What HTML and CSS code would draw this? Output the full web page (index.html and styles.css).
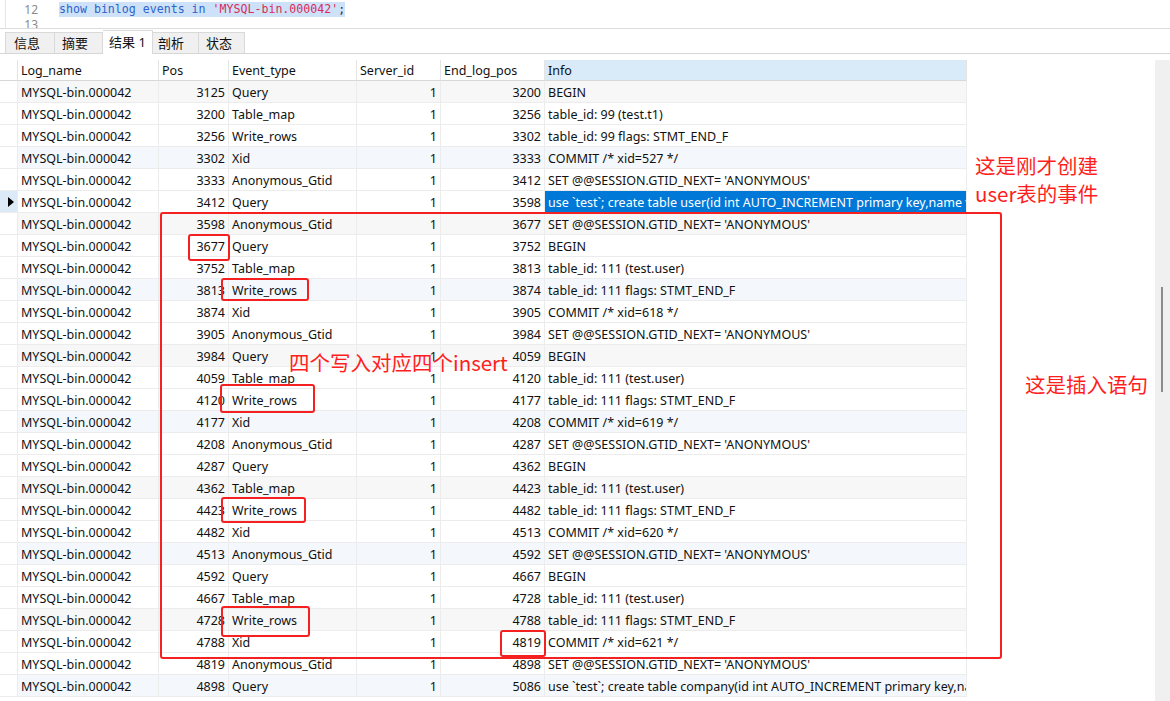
FILE: index.html
```html
<!DOCTYPE html>
<html lang="zh-CN">
<head>
<meta charset="utf-8">
<title>binlog events</title>
<link rel="stylesheet" href="styles.css">
</head>
<body>
<div class="editor">
  <div class="line"><span class="ln">12</span><span class="code"><span class="hl"><span class="kw">show binlog events in </span><span class="str">'MYSQL-bin.000042'</span><span class="pn">;</span></span></span></div>
  <div class="line"><span class="ln">13</span><span class="code"></span></div>
</div>
<div class="tabs">
  <div class="tab t1">信息</div>
  <div class="tab t2">摘要</div>
  <div class="tab t3 active">结果 1</div>
  <div class="tab t4">剖析</div>
  <div class="tab t5">状态</div>
</div>
<div class="result">
  <div class="grid">
    <div class="row head"><div class="c gut"></div><div class="c">Log_name</div><div class="c">Pos</div><div class="c">Event_type</div><div class="c">Server_id</div><div class="c">End_log_pos</div><div class="c info-h">Info</div></div>
    <div class="row g"><div class="c gut"></div><div class="c">MYSQL-bin.000042</div><div class="c r">3125</div><div class="c">Query</div><div class="c r">1</div><div class="c r">3200</div><div class="c">BEGIN</div></div>
    <div class="row"><div class="c gut"></div><div class="c">MYSQL-bin.000042</div><div class="c r">3200</div><div class="c">Table_map</div><div class="c r">1</div><div class="c r">3256</div><div class="c">table_id: 99 (test.t1)</div></div>
    <div class="row"><div class="c gut"></div><div class="c">MYSQL-bin.000042</div><div class="c r">3256</div><div class="c">Write_rows</div><div class="c r">1</div><div class="c r">3302</div><div class="c">table_id: 99 flags: STMT_END_F</div></div>
    <div class="row b"><div class="c gut"></div><div class="c">MYSQL-bin.000042</div><div class="c r">3302</div><div class="c">Xid</div><div class="c r">1</div><div class="c r">3333</div><div class="c">COMMIT /* xid=527 */</div></div>
    <div class="row"><div class="c gut"></div><div class="c">MYSQL-bin.000042</div><div class="c r">3333</div><div class="c">Anonymous_Gtid</div><div class="c r">1</div><div class="c r">3412</div><div class="c">SET @@SESSION.GTID_NEXT= 'ANONYMOUS'</div></div>
    <div class="row"><div class="c gut cur"><span class="tri"></span></div><div class="c">MYSQL-bin.000042</div><div class="c r">3412</div><div class="c">Query</div><div class="c r">1</div><div class="c r">3598</div><div class="c sel">use `test`; create table user(id int AUTO_INCREMENT primary key,name varchar(20))</div></div>
    <div class="row g"><div class="c gut"></div><div class="c">MYSQL-bin.000042</div><div class="c r">3598</div><div class="c">Anonymous_Gtid</div><div class="c r">1</div><div class="c r">3677</div><div class="c">SET @@SESSION.GTID_NEXT= 'ANONYMOUS'</div></div>
    <div class="row"><div class="c gut"></div><div class="c">MYSQL-bin.000042</div><div class="c r">3677</div><div class="c">Query</div><div class="c r">1</div><div class="c r">3752</div><div class="c">BEGIN</div></div>
    <div class="row"><div class="c gut"></div><div class="c">MYSQL-bin.000042</div><div class="c r">3752</div><div class="c">Table_map</div><div class="c r">1</div><div class="c r">3813</div><div class="c">table_id: 111 (test.user)</div></div>
    <div class="row b"><div class="c gut"></div><div class="c">MYSQL-bin.000042</div><div class="c r">3813</div><div class="c">Write_rows</div><div class="c r">1</div><div class="c r">3874</div><div class="c">table_id: 111 flags: STMT_END_F</div></div>
    <div class="row"><div class="c gut"></div><div class="c">MYSQL-bin.000042</div><div class="c r">3874</div><div class="c">Xid</div><div class="c r">1</div><div class="c r">3905</div><div class="c">COMMIT /* xid=618 */</div></div>
    <div class="row"><div class="c gut"></div><div class="c">MYSQL-bin.000042</div><div class="c r">3905</div><div class="c">Anonymous_Gtid</div><div class="c r">1</div><div class="c r">3984</div><div class="c">SET @@SESSION.GTID_NEXT= 'ANONYMOUS'</div></div>
    <div class="row g"><div class="c gut"></div><div class="c">MYSQL-bin.000042</div><div class="c r">3984</div><div class="c">Query</div><div class="c r">1</div><div class="c r">4059</div><div class="c">BEGIN</div></div>
    <div class="row"><div class="c gut"></div><div class="c">MYSQL-bin.000042</div><div class="c r">4059</div><div class="c">Table_map</div><div class="c r">1</div><div class="c r">4120</div><div class="c">table_id: 111 (test.user)</div></div>
    <div class="row"><div class="c gut"></div><div class="c">MYSQL-bin.000042</div><div class="c r">4120</div><div class="c">Write_rows</div><div class="c r">1</div><div class="c r">4177</div><div class="c">table_id: 111 flags: STMT_END_F</div></div>
    <div class="row b"><div class="c gut"></div><div class="c">MYSQL-bin.000042</div><div class="c r">4177</div><div class="c">Xid</div><div class="c r">1</div><div class="c r">4208</div><div class="c">COMMIT /* xid=619 */</div></div>
    <div class="row"><div class="c gut"></div><div class="c">MYSQL-bin.000042</div><div class="c r">4208</div><div class="c">Anonymous_Gtid</div><div class="c r">1</div><div class="c r">4287</div><div class="c">SET @@SESSION.GTID_NEXT= 'ANONYMOUS'</div></div>
    <div class="row"><div class="c gut"></div><div class="c">MYSQL-bin.000042</div><div class="c r">4287</div><div class="c">Query</div><div class="c r">1</div><div class="c r">4362</div><div class="c">BEGIN</div></div>
    <div class="row g"><div class="c gut"></div><div class="c">MYSQL-bin.000042</div><div class="c r">4362</div><div class="c">Table_map</div><div class="c r">1</div><div class="c r">4423</div><div class="c">table_id: 111 (test.user)</div></div>
    <div class="row"><div class="c gut"></div><div class="c">MYSQL-bin.000042</div><div class="c r">4423</div><div class="c">Write_rows</div><div class="c r">1</div><div class="c r">4482</div><div class="c">table_id: 111 flags: STMT_END_F</div></div>
    <div class="row"><div class="c gut"></div><div class="c">MYSQL-bin.000042</div><div class="c r">4482</div><div class="c">Xid</div><div class="c r">1</div><div class="c r">4513</div><div class="c">COMMIT /* xid=620 */</div></div>
    <div class="row b"><div class="c gut"></div><div class="c">MYSQL-bin.000042</div><div class="c r">4513</div><div class="c">Anonymous_Gtid</div><div class="c r">1</div><div class="c r">4592</div><div class="c">SET @@SESSION.GTID_NEXT= 'ANONYMOUS'</div></div>
    <div class="row"><div class="c gut"></div><div class="c">MYSQL-bin.000042</div><div class="c r">4592</div><div class="c">Query</div><div class="c r">1</div><div class="c r">4667</div><div class="c">BEGIN</div></div>
    <div class="row"><div class="c gut"></div><div class="c">MYSQL-bin.000042</div><div class="c r">4667</div><div class="c">Table_map</div><div class="c r">1</div><div class="c r">4728</div><div class="c">table_id: 111 (test.user)</div></div>
    <div class="row g"><div class="c gut"></div><div class="c">MYSQL-bin.000042</div><div class="c r">4728</div><div class="c">Write_rows</div><div class="c r">1</div><div class="c r">4788</div><div class="c">table_id: 111 flags: STMT_END_F</div></div>
    <div class="row"><div class="c gut"></div><div class="c">MYSQL-bin.000042</div><div class="c r">4788</div><div class="c">Xid</div><div class="c r">1</div><div class="c r">4819</div><div class="c">COMMIT /* xid=621 */</div></div>
    <div class="row"><div class="c gut"></div><div class="c">MYSQL-bin.000042</div><div class="c r">4819</div><div class="c">Anonymous_Gtid</div><div class="c r">1</div><div class="c r">4898</div><div class="c">SET @@SESSION.GTID_NEXT= 'ANONYMOUS'</div></div>
    <div class="row b"><div class="c gut"></div><div class="c">MYSQL-bin.000042</div><div class="c r">4898</div><div class="c">Query</div><div class="c r">1</div><div class="c r">5086</div><div class="c">use `test`; create table company(id int AUTO_INCREMENT primary key,name varchar(20))</div></div>
  </div>
  <div class="vscroll"><div class="thumb"></div></div>
</div>

<div class="mark big"></div>
<div class="mark m1"></div>
<div class="mark m2"></div>
<div class="mark m3"></div>
<div class="mark m4"></div>
<div class="mark m5"></div>
<div class="mark m6"></div>
<div class="note n1">这是刚才创建<br>user表的事件</div>
<div class="note n2">四个写入对应四个insert</div>
<div class="note n3">这是插入语句</div>
</body>
</html>
```
FILE: styles.css
```css
html, body {
  margin: 0;
  padding: 0;
}
body {
  width: 1170px;
  height: 701px;
  overflow: hidden;
  background: #fff;
  position: relative;
  font-family: "Noto Sans", "Noto Sans CJK SC", sans-serif;
  color: #111;
}

/* editor */
.editor {
  height: 28px;
  overflow: hidden;
  margin-left: 5px;
  border-left: 1px solid #e6e6e6;
  padding-top: 2px;
  box-sizing: border-box;
}
.line {
  display: flex;
  height: 15px;
  align-items: center;
}
.ln {
  width: 32px;
  text-align: right;
  font-size: 12px;
  color: #8a8a8a;
}
.code {
  margin-left: 21px;
  font-family: "DejaVu Sans Mono", monospace;
  font-size: 11.6px;
  white-space: pre;
}
.hl {
  display: inline-block;
  height: 15px;
  line-height: 15px;
  background: #cde2f8;
}
.kw { color: #2e63c9; }
.str { color: #d92b5c; }
.pn { color: #333; }

/* tabs */
.tabs {
  height: 26px;
  box-sizing: border-box;
  border-top: 1px solid #dcdcdc;
  border-bottom: 1px solid #d6d6d6;
  display: flex;
  align-items: flex-end;
  padding-left: 5px;
  background: #fff;
}
.tab {
  height: 21px;
  box-sizing: border-box;
  background: #f0f0f0;
  border: 1px solid #d9d9d9;
  border-bottom: none;
  border-left: none;
  font-size: 13px;
  line-height: 20px;
  padding-left: 8px;
  color: #111;
}
.t1 { width: 50px; border-left: 1px solid #d9d9d9; }
.t2 { width: 48px; padding-left: 7px; }
.t3 { width: 50px; padding-left: 6px; }
.t4 { width: 46px; padding-left: 5px; }
.t5 { width: 46px; padding-left: 7px; }
.tab.active {
  background: #fff;
  height: 24px;
  line-height: 22px;
  margin-bottom: -1px;
}

/* result grid */
.result {
  display: flex;
  margin-top: 6px;
  height: 641px;
}
.grid {
  width: 1155px;
  flex: none;
}
.vscroll {
  width: 15px;
  background: #f0f0f0;
  flex: none;
}
.thumb {
  margin-top: 227px;
  margin-left: 6px;
  width: 2px;
  height: 105px;
  background: #8c8c8c;
}
.row {
  display: grid;
  grid-template-columns: 18px 141px 70px 128px 84px 104px 422px;
  width: 967px;
  height: 22px;
  font-size: 12.5px;
}
.c {
  box-sizing: border-box;
  border-right: 1px solid #ececec;
  border-bottom: 1px solid #ececec;
  padding: 2px 3px 0;
  line-height: 19px;
  white-space: nowrap;
  overflow: hidden;
}
.r { text-align: right; padding-right: 3px; }
.row.g .c { background: #f7f7f7; }
.row.b .c { background: #f4f8fc; }
.row .gut { background: #fff; }
.row.g .gut, .row.b .gut { background: #fff; }
.head {
  height: 21px;
  background: #fff;
}
.head .c {
  padding-top: 2px;
  line-height: 18px;
  border-bottom: 1px solid #d8d8d8;
  border-right: 1px solid #e4e4e4;
}
.head .info-h { background: #d9eaf8; }
.gut { padding: 0; }
.row .gut.cur {
  background: #dce9f6;
  display: flex;
  align-items: center;
  padding: 0;
}
.tri {
  width: 0;
  height: 0;
  margin-left: 8px;
  border-top: 5px solid transparent;
  border-bottom: 5px solid transparent;
  border-left: 6px solid #000;
}
.sel {
  background: #0078d7;
  color: #fff;
}

/* annotations */
.mark {
  position: absolute;
  box-sizing: border-box;
  border: 2px solid #f52020;
  border-radius: 3px;
}
.big { left: 160px; top: 212px; width: 842px; height: 447px; }
.m1 { left: 188px; top: 234px; width: 42px; height: 27px; }
.m2 { left: 221px; top: 278px; width: 88px; height: 23px; }
.m3 { left: 220px; top: 384px; width: 95px; height: 29px; }
.m4 { left: 221px; top: 497px; width: 85px; height: 26px; }
.m5 { left: 221px; top: 606px; width: 89px; height: 31px; }
.m6 { left: 500px; top: 630px; width: 46px; height: 27px; }
.note {
  position: absolute;
  color: #ff1e1e;
  font-family: "Noto Sans CJK SC", "Noto Sans", sans-serif;
  font-size: 20.5px;
  line-height: 27.5px;
  white-space: nowrap;
}
.n1 { left: 975px; top: 152px; }
.n2 { left: 289px; top: 349px; }
.n3 { left: 1025px; top: 371px; }
```
